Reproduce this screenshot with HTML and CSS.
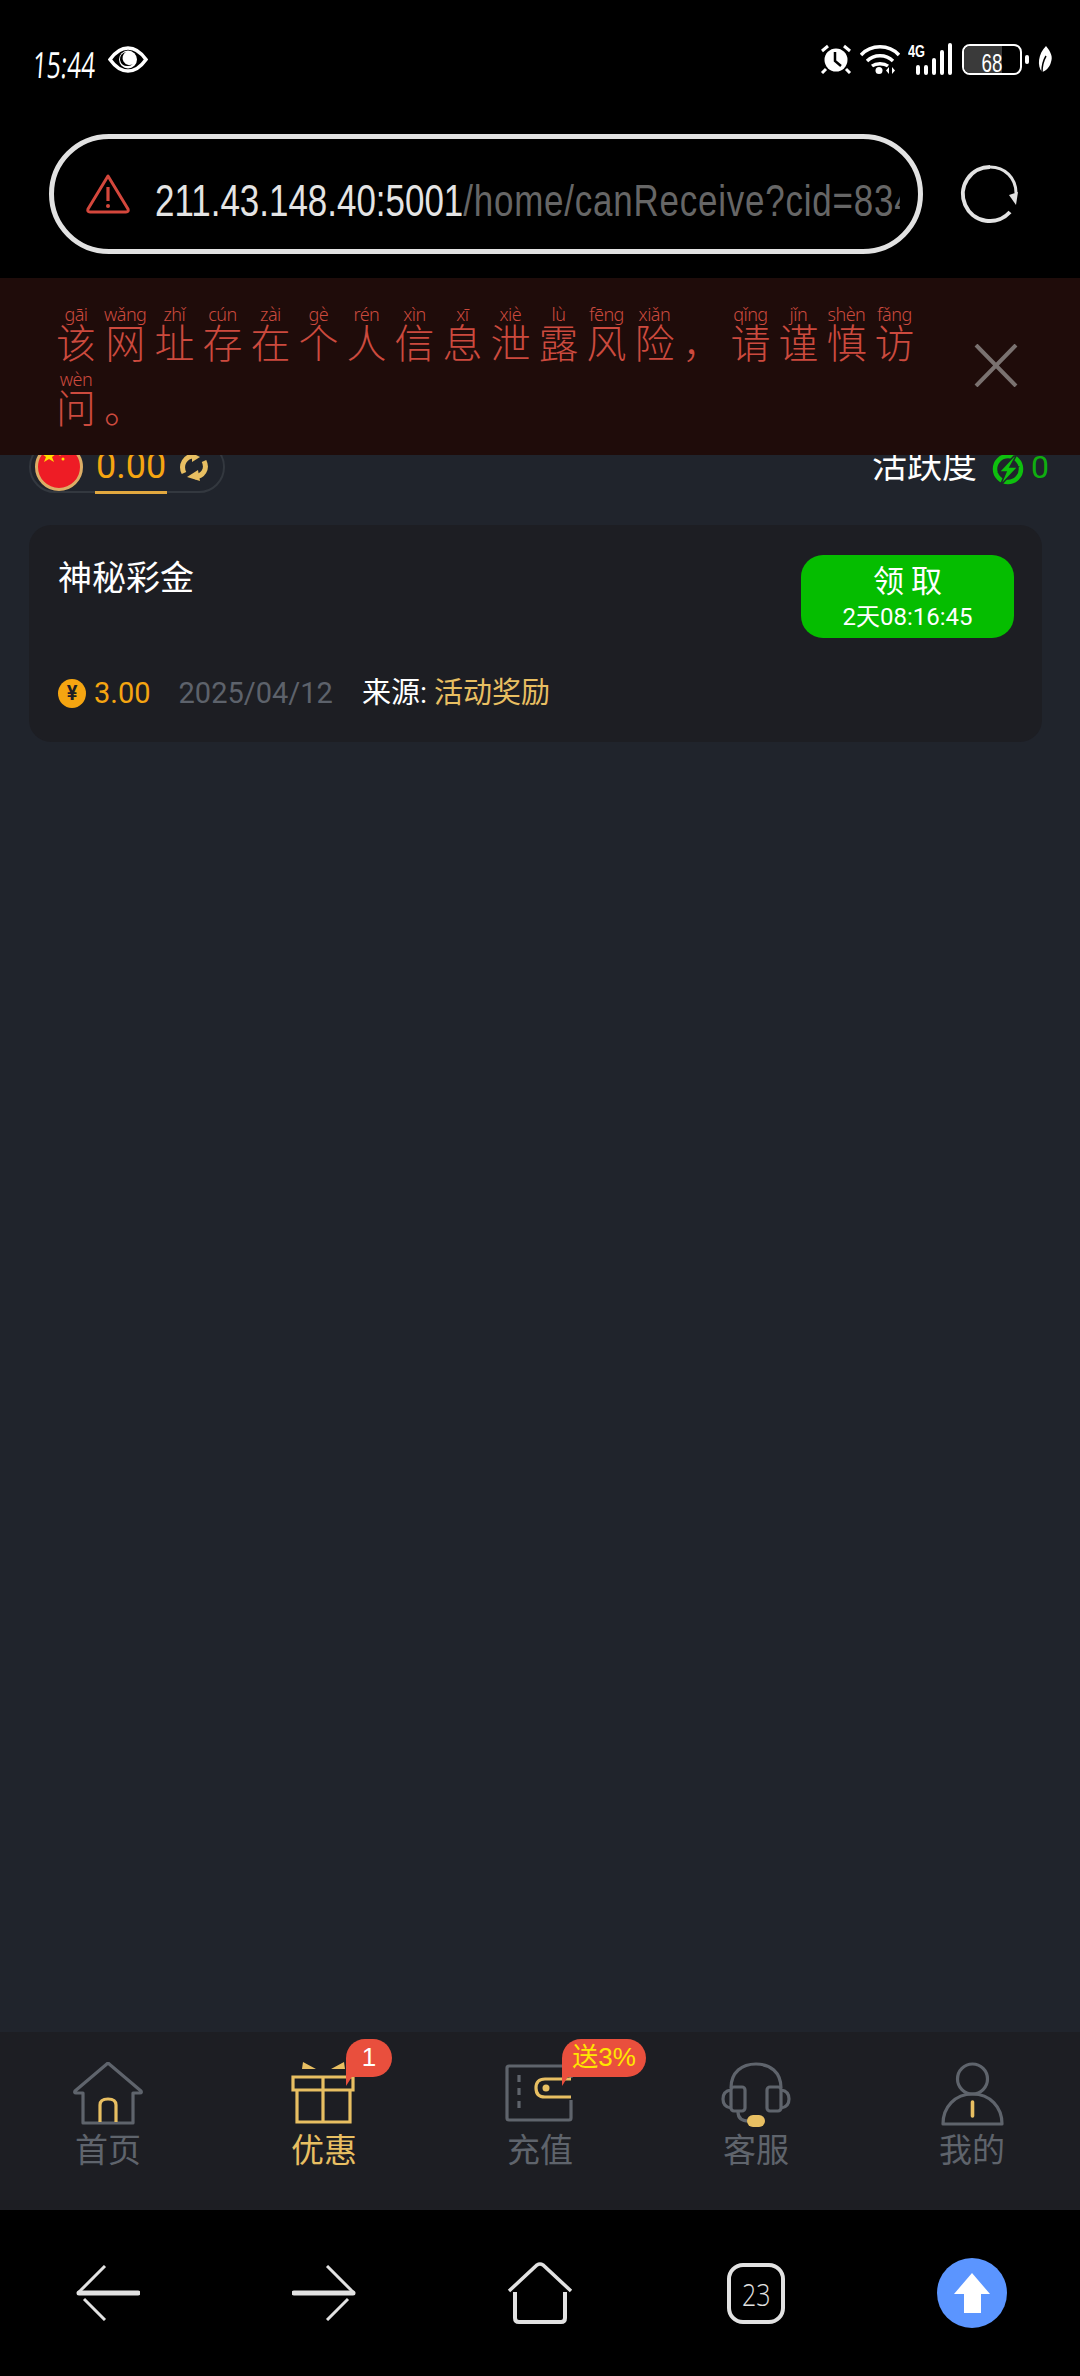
FILE: index.html
```html
<!DOCTYPE html>
<html lang="zh">
<head>
<meta charset="utf-8">
<title>优惠</title>
<link rel="stylesheet" href="styles.css">
</head>
<body>
<div class="phone">
	<div class="status">
		<div class="status-left">
			<span class="clock">15:44</span>
			<svg class="eye" width="40" height="27" viewBox="0 0 40 27"><path d="M2 13.500C8 5 14 2 20 2s12 3 18 11.500C32 22 26 25 20 25S8 22 2 13.500z" fill="none" stroke="#fff" stroke-width="3.500"/><circle cx="20" cy="13.500" r="9" fill="#fff"/><path d="M18 6a7 7 0 0 0 2 14 8 8 0 0 0 5-2 6 6 0 0 1-7-12z" fill="#000"/></svg>
		</div>
		<div class="status-right">
			<svg width="32" height="30" viewBox="0 0 32 30"><circle cx="16" cy="16" r="11.500" fill="#fff"/><path d="M15 8v9l6 5" fill="none" stroke="#000" stroke-width="2.500"/><path d="M2 7l6-5M30 7l-6-5M6 25l-4 4M26 25l4 4" stroke="#fff" stroke-width="3"/></svg>
			<svg width="40" height="30" viewBox="0 0 40 30"><path d="M1 11c10-11 28-11 38 0M7 17c7-7 19-7 26 0M12 22c4-3 12-3 16 0" fill="none" stroke="#fff" stroke-width="3.400"/><circle cx="19" cy="26.500" r="3.500" fill="#fff"/><path d="M29 23v7l-3-3.500zM32 23v7l3-3.500z" fill="#fff"/></svg>
			<div class="signal">
				<span class="net">4G</span>
				<svg width="44" height="32" viewBox="0 0 44 32"><path d="M10 24v6M18 24v6M26 17v13M34 9v21M42 2v28" stroke="#fff" stroke-width="4" stroke-linecap="round"/></svg>
			</div>
			<div class="battery"><div class="battery-level"></div><span class="battery-num">68</span></div>
			<span class="battery-tip"></span>
			<svg class="leaf" width="16" height="27" viewBox="0 0 16 27"><path d="M9 0c5 6 7 11 5 16-1 5-5 9-9 10C0 20 1 8 9 0z" fill="#fff"/><path d="M5 26c0-6 1-11 4-16" fill="none" stroke="#000" stroke-width="1.500"/></svg>
		</div>
	</div>

	<div class="addr-row">
		<div class="addr">
			<svg class="addr-alert" width="46" height="42" viewBox="0 0 46 42"><path d="M23 3L3 36q-1 3 2 3h36q3 0 2-3z" fill="none" stroke="#d4473c" stroke-width="3" stroke-linejoin="round"/><path d="M23 14v14" stroke="#d4473c" stroke-width="3.200"/><circle cx="23" cy="33" r="2" fill="#d4473c"/></svg>
			<div class="url"><span class="host">211.43.148.40:5001</span><span class="path">/home/canReceive?cid=834</span></div>
		</div>
		<svg class="reload" width="60" height="60" viewBox="0 0 60 60"><path d="M30 3A27 27 0 1 0 50 48" fill="none" stroke="#e2e2e2" stroke-width="4"/><path d="M30 3c15 0 26 11 26 26" fill="none" stroke="#e2e2e2" stroke-width="3"/><path d="M49 31l9-3-2 13z" fill="#e2e2e2"/></svg>
	</div>

	<div class="warn">
		<div class="warn-text">
			<ruby>该<rt>gāi</rt></ruby><ruby>网<rt>wǎng</rt></ruby><ruby>址<rt>zhǐ</rt></ruby><ruby>存<rt>cún</rt></ruby><ruby>在<rt>zài</rt></ruby><ruby>个<rt>gè</rt></ruby><ruby>人<rt>rén</rt></ruby><ruby>信<rt>xìn</rt></ruby><ruby>息<rt>xī</rt></ruby><ruby>泄<rt>xiè</rt></ruby><ruby>露<rt>lù</rt></ruby><ruby>风<rt>fēng</rt></ruby><ruby>险<rt>xiǎn</rt></ruby><ruby>，<rt>&nbsp;</rt></ruby><ruby>请<rt>qǐng</rt></ruby><ruby>谨<rt>jǐn</rt></ruby><ruby>慎<rt>shèn</rt></ruby><ruby>访<rt>fǎng</rt></ruby><ruby>问<rt>wèn</rt></ruby><ruby>。<rt>&nbsp;</rt></ruby>
		</div>
		<svg class="warn-close" width="44" height="43" viewBox="0 0 44 43"><path d="M2 1l40 41M42 1L2 42" stroke="#7a7270" stroke-width="4"/></svg>
	</div>

	<div class="page">
		<div class="wallet-row">
			<div class="balance">
				<svg width="48" height="48" viewBox="0 0 48 48"><circle cx="24" cy="24" r="22.500" fill="#ee1c25" stroke="#dcae66" stroke-width="3"/><path d="M14 6l2 5h5l-4 3 2 5-5-3-5 3 2-5-4-3h5z" fill="#ffde00"/><circle cx="25" cy="11" r="1.500" fill="#ffde00"/><circle cx="28" cy="16" r="1.500" fill="#ffde00"/></svg>
				<span class="balance-num">0.00</span>
				<svg width="30" height="28" viewBox="0 0 30 28"><path d="M5 20C1 12 6 3 15 3" fill="none" stroke="#e8bf62" stroke-width="5"/><path d="M13 0l8 4-8 5z" fill="#e8bf62"/><path d="M25 8c4 8-1 15-9 16" fill="none" stroke="#e8bf62" stroke-width="5"/><path d="M19 17l-11 7 13 4z" fill="#e8bf62"/></svg>
			</div>
			<div class="activity">
				<span class="activity-label">活跃度</span>
				<svg class="bolt" width="32" height="32" viewBox="0 0 32 32"><circle cx="16" cy="15" r="13" fill="none" stroke="#0ec00e" stroke-width="4.500"/><path d="M22 2L7 18h7L8 32l18-19h-8l6-11z" fill="#0ec00e" stroke="#20242c" stroke-width="1.500"/></svg>
				<span class="activity-num">0</span>
			</div>
		</div>

		<div class="card">
			<div class="card-top">
				<div class="card-title">神秘彩金</div>
				<div class="claim"><div class="claim-label">领 取</div><div class="claim-time">2天08:16:45</div></div>
			</div>
			<div class="card-info">
				<span class="coin">¥</span>
				<span class="amount">3.00</span>
				<span class="date">2025/04/12</span>
				<span class="source">来源: <em>活动奖励</em></span>
			</div>
		</div>
	</div>

	<div class="tabs">
		<div class="tab">
			<svg width="72" height="66" viewBox="0 0 72 66"><path d="M11 61V31H4q-2 0-1-2L36 1l33 28q1 2-1 2h-7v30z" fill="none" stroke="#5f646c" stroke-width="3.200" stroke-linejoin="round"/><path d="M28 60V43q0-6 8-6t8 6v17" fill="none" stroke="#e8bf62" stroke-width="3.200"/></svg>
			<span class="tab-label">首页</span>
		</div>
		<div class="tab on">
			<div class="tab-icon">
				<svg width="72" height="66" viewBox="0 0 72 66"><path d="M5 15h60v13H5zM9 28v32h53V28M35 15v45" fill="none" stroke="#e8bf62" stroke-width="3.200"/><path d="M15 0l13 7H14zM56 0l1 7H43z" fill="#e8bf62"/></svg>
				<span class="badge">1</span>
			</div>
			<span class="tab-label">优惠</span>
		</div>
		<div class="tab">
			<div class="tab-icon">
				<svg width="72" height="66" viewBox="0 0 72 66"><path d="M67 38v18q0 2-2 2H5q-2 0-2-2V6q0-2 2-2h60q2 0 2 2v10" fill="none" stroke="#5f646c" stroke-width="3.200"/><path d="M15 13v34" stroke="#5f646c" stroke-width="3.200" stroke-dasharray="7 6"/><path d="M67 17H41q-9 0-9 9t9 9h26" fill="none" stroke="#e8bf62" stroke-width="3.200"/><circle cx="42" cy="26" r="3.500" fill="#e8bf62"/></svg>
				<span class="badge gift">送3%</span>
			</div>
			<span class="tab-label">充值</span>
		</div>
		<div class="tab">
			<svg width="72" height="66" viewBox="0 0 72 66"><path d="M11 26C11 10 22 2 36 2s25 8 25 24M18 49v1q0 9 11 9h-2" fill="none" stroke="#5f646c" stroke-width="3.200"/><rect x="11" y="25" width="14" height="24" rx="3" fill="none" stroke="#5f646c" stroke-width="3.200"/><rect x="47" y="25" width="14" height="24" rx="3" fill="none" stroke="#5f646c" stroke-width="3.200"/><path d="M11 28q-8 1-8 9t8 9M61 28q8 1 8 9t-8 9" fill="none" stroke="#5f646c" stroke-width="3.200"/><rect x="27" y="53" width="18" height="12" rx="6" fill="#e8bf62"/></svg>
			<span class="tab-label">客服</span>
		</div>
		<div class="tab">
			<svg width="72" height="66" viewBox="0 0 72 66"><circle cx="36.500" cy="17" r="15" fill="none" stroke="#5f646c" stroke-width="3.200"/><path d="M7 62c0-17 12-30 29.500-30S66 45 66 62z" fill="none" stroke="#5f646c" stroke-width="3.200" stroke-linejoin="round"/><path d="M36.500 40v14" stroke="#e8bf62" stroke-width="3.600" stroke-linecap="round"/></svg>
			<span class="tab-label">我的</span>
		</div>
	</div>

	<div class="nav">
		<svg width="64" height="56" viewBox="0 0 64 56"><path d="M29 1L3 27" fill="none" stroke="#e2e2e2" stroke-width="3"/><path d="M3 28h59" stroke="#e2e2e2" stroke-width="5" stroke-linecap="round"/><path d="M8 34l21 21" fill="none" stroke="#e2e2e2" stroke-width="3"/></svg>
		<svg width="64" height="56" viewBox="0 0 64 56"><path d="M35 1l26 26" fill="none" stroke="#e2e2e2" stroke-width="3"/><path d="M2 28h59" stroke="#e2e2e2" stroke-width="5" stroke-linecap="round"/><path d="M56 34L35 55" fill="none" stroke="#e2e2e2" stroke-width="3"/></svg>
		<svg width="66" height="62" viewBox="0 0 66 62"><path d="M2 29L30 3q3-2 6 0l28 26" fill="none" stroke="#e2e2e2" stroke-width="3.500"/><path d="M8 30v26q0 4 4 4h42q4 0 4-4V30" fill="none" stroke="#e2e2e2" stroke-width="4"/></svg>
		<div class="tab-count"><span>23</span></div>
		<svg width="70" height="70" viewBox="0 0 70 70"><circle cx="35" cy="35" r="35" fill="#5b95ff"/><path d="M35 15L53 36H44V55H27V36H17z" fill="#fff"/></svg>
	</div>
</div>
</body>
</html>
```

FILE: styles.css
```css
*{ margin:0; padding:0; box-sizing:border-box;}
body{ background:#000; font-family:"Liberation Sans","Noto Sans CJK SC",sans-serif;}
em{ font-style:normal;}
.phone{ width:1080px; height:2376px; display:flex; flex-direction:column; background:#000; overflow:hidden;}

.status{ height:112px; padding:43px 27px 0 33px; display:flex; justify-content:space-between; align-items:flex-start; color:#fff;}
.status-left{ display:flex; align-items:flex-start; gap:10px;}
.clock{ font:400 36px/40px "Open Sans",sans-serif; transform:scaleX(.68) skewX(-6deg); transform-origin:left center; margin-right:-27px; margin-top:2px;}
.eye{ margin-top:3px;}
.status-right{ display:flex; align-items:center; gap:8px;}
.signal{ position:relative; width:44px; height:32px; margin-right:2px;}
.signal svg{ position:absolute; left:0; top:0;}
.net{ position:absolute; left:0; top:1px; font-size:16px; line-height:16px; font-weight:bold; transform:scaleX(.8); transform-origin:left;}
.battery{ position:relative; width:60px; height:31px; border:2.500px solid #fff; border-radius:8px; overflow:hidden;}
.battery-level{ width:68%; height:100%; background:#3a3a3a;}
.battery-num{ position:absolute; left:0; right:0; top:3px; text-align:center; font-size:25px; line-height:28px; transform:scaleX(.75);}
.battery-tip{ width:4px; height:9px; background:#fff; border-radius:2px; margin-left:-5px;}

.addr-row{ height:166px; padding:22px 60px 0 49px; display:flex; align-items:flex-start; justify-content:space-between; background:#000;}
.addr{ width:874px; height:120px; border:5px solid #e2e2e2; border-radius:60px; padding:0 0 0 31px; display:flex; align-items:center; gap:24px; overflow:hidden;}
.addr-alert{ flex-shrink:0;}
.url{ flex-shrink:0; width:938px; overflow:hidden; white-space:nowrap; font-size:44px; line-height:60px; margin-top:14px; transform:scaleX(.794); transform-origin:left;}
.host{ color:#e4e4e4;}
.path{ color:#666; letter-spacing:1px;}
.reload{ margin-top:30px;}

.warn{ height:177px; background:#1f0c0a; padding:25px 62px 0 56px; display:flex; justify-content:space-between; align-items:flex-start;}
.warn-text{ width:880px; color:#cc4a3e; font-size:40px; line-height:65px; font-family:"Noto Sans CJK SC",sans-serif; font-weight:300;}
.warn-text ruby{ ruby-position:over; margin-right:8px;}
.warn-text rt{ position:relative; top:3px; font-size:18px; line-height:20px; letter-spacing:-.5px; font-family:"Noto Sans",sans-serif;}
.warn-close{ margin-top:41px;}

.page{ flex:1; background:#20242c; padding:0 38px 0 29px; overflow:hidden;}
.wallet-row{ height:52px; margin:-14px -7px 32px 0; display:flex; justify-content:space-between; align-items:center;}
.balance{ width:196px; height:52px; border:2.500px solid #33383f; border-radius:26px; padding-left:4px; display:flex; align-items:center;}
.balance-num{ color:#f5a511; font:36px/42px Roboto,sans-serif; border-bottom:3px solid #e2a83f; padding:0 1px 4px; margin:4px 12px 0 12px;}
.activity{ display:flex; align-items:center; color:#fff;}
.activity-label{ font:35px/40px "Noto Sans CJK SC",sans-serif; margin:-8px 15px 0 0;}
.bolt{ margin:6px 7px 0 0;}
.activity-num{ color:#0fae0f; font:32px/40px Roboto,sans-serif;}

.card{ height:217px; background:#1d1e23; border-radius:22px; padding:28px 28px 0 29px;}
.card-top{ display:flex; justify-content:space-between; align-items:flex-start;}
.card-title{ color:#fff; font-size:34px; line-height:46px; font-family:"Noto Sans CJK SC",sans-serif;}
.claim{ width:213px; height:83px; margin-top:2px; background:#05bd00; border-radius:22px; color:#fff; text-align:center; padding-top:5px;}
.claim-label{ font-size:31px; line-height:38px; font-family:"Noto Sans CJK SC",sans-serif;}
.claim-time{ font-size:24px; line-height:32px; margin-top:3px; font-family:Roboto,"Noto Sans CJK SC",sans-serif;}
.card-info{ display:flex; align-items:center; margin-top:35px; font:29px/40px Roboto,"Noto Sans CJK SC",sans-serif;}
.coin{ width:28px; height:29px; border-radius:50%; background:#f5a511; color:#1d1e23; font-size:20px; line-height:29px; text-align:center; font-weight:bold; margin-right:8px;}
.amount{ color:#f5a511; margin-right:28px;}
.date{ color:#5d626b; margin-right:29px;}
.source{ color:#fff;}
.source em{ color:#e8bf62;}

.tabs{ height:178px; background:#1d1e23; display:flex; padding-top:30px;}
.tab{ flex:1; display:flex; flex-direction:column; align-items:center; color:#5f646c; font-size:33px; line-height:44px; font-family:"Noto Sans CJK SC",sans-serif;}
.tab svg{ display:block;}
.tab.on{ color:#e8bf62;}
.tab-label{ margin-top:-2px;}
.tab-icon{ position:relative;}
.badge{ position:absolute; left:58px; top:-23px; height:38px; min-width:46px; padding:0 8px; background:#e94f3d; color:#fff; font:26px/36px "Liberation Sans","Noto Sans CJK SC",sans-serif; text-align:center; border-radius:19px 19px 19px 0;}
.badge::after{ content:""; position:absolute; left:0; top:30px; border-left:11px solid #e94f3d; border-bottom:17px solid transparent;}
.badge.gift{ color:#ffe600; width:84px; padding:0; white-space:nowrap;}

.nav{ height:166px; background:#000; display:grid; grid-template-columns:repeat(5,1fr); justify-items:center; align-items:center;}
.tab-count{ width:58px; height:61px; border:4px solid #e2e2e2; border-radius:16px; color:#e2e2e2; text-align:center; font:300 32px/54px "Open Sans",sans-serif;}
.tab-count span{ display:inline-block; transform:scaleX(.78);}
```
